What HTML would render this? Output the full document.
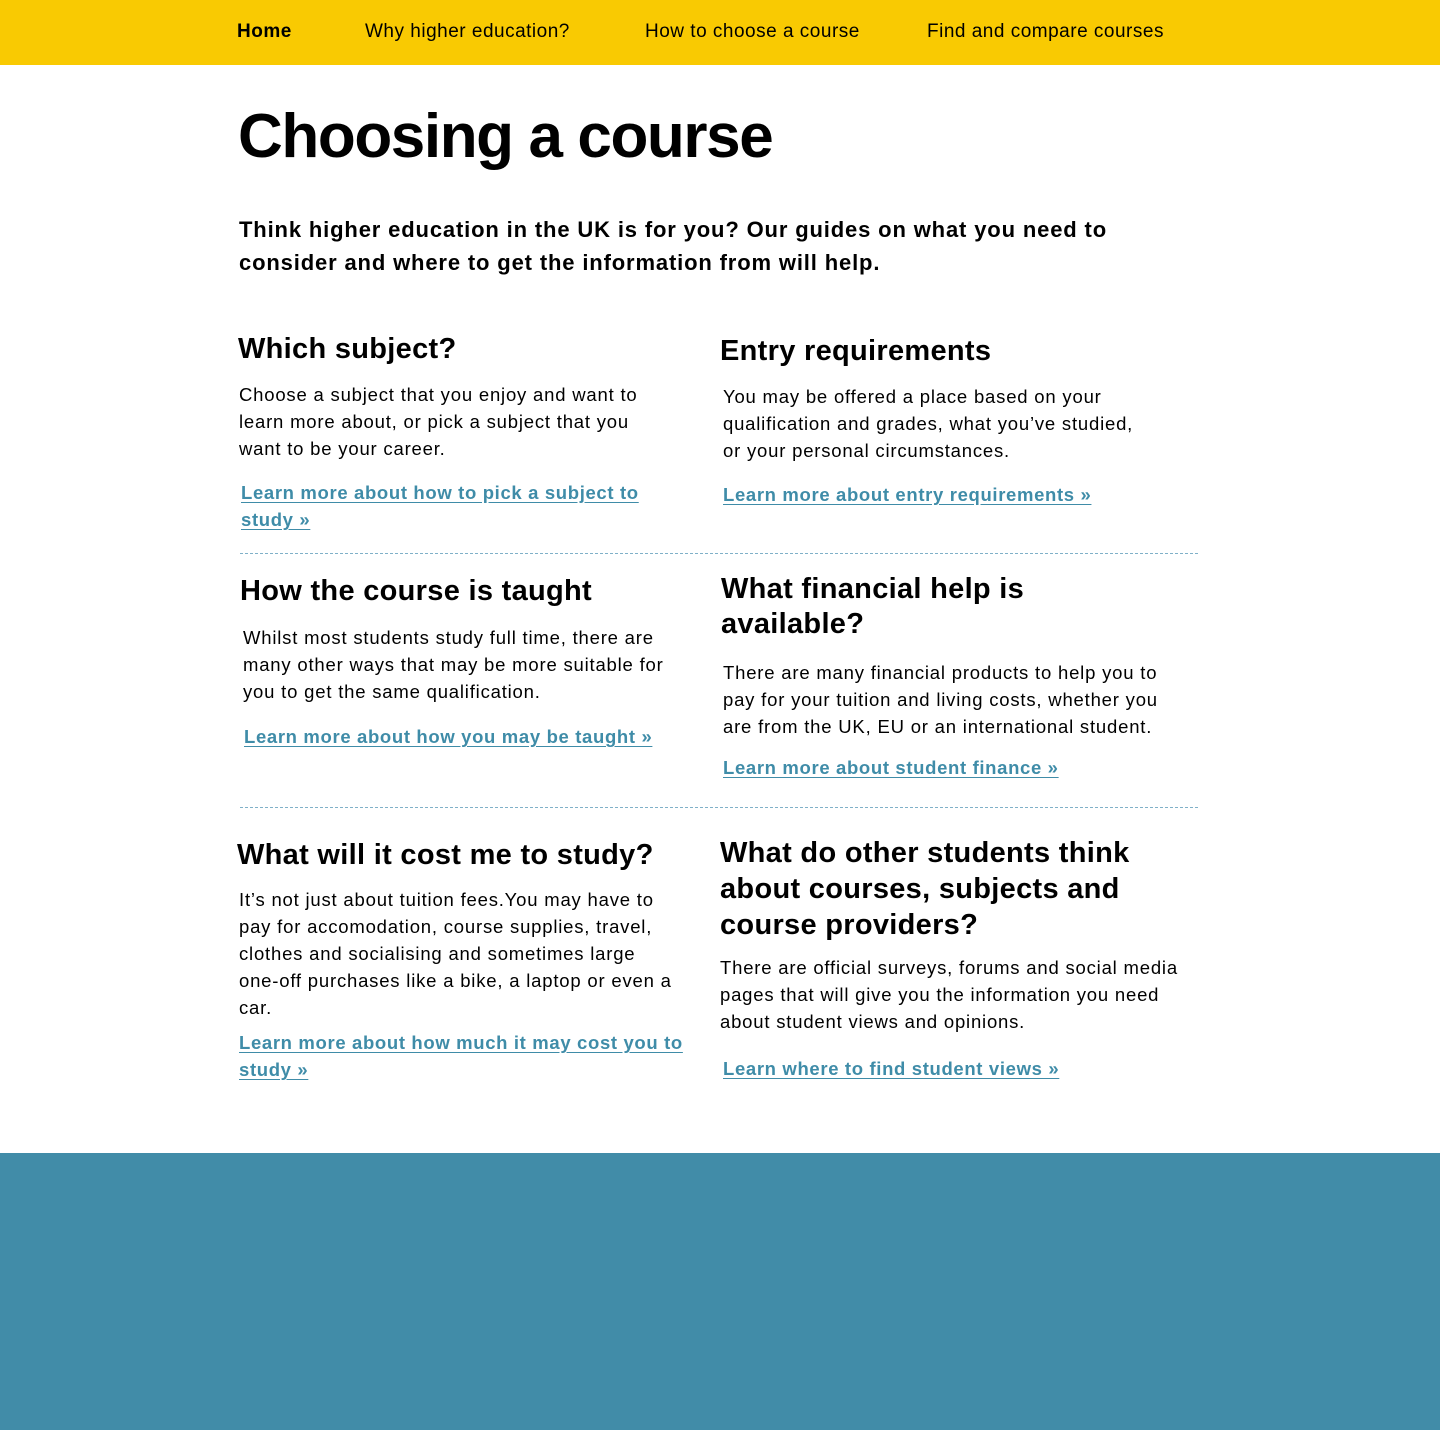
<!DOCTYPE html>
<html><head><meta charset="utf-8"><style>
*{margin:0;padding:0;box-sizing:border-box}
body{width:1440px;height:1430px;position:relative;background:#fff;font-family:"Liberation Sans",sans-serif;color:#000;overflow:hidden}
.nav{position:absolute;left:0;top:0;width:1440px;height:65px;background:#f9ca02}
.nav span{position:absolute;top:20px;font-size:19px;line-height:24px;white-space:nowrap;letter-spacing:0.5px}
.a{position:absolute;white-space:nowrap}
.h{font-size:29px;line-height:36px;font-weight:bold;letter-spacing:0.3px}
.p{font-size:18.5px;line-height:27px;letter-spacing:0.8px}
.l{font-size:18.5px;line-height:27px;font-weight:bold;color:#3f8ca8;text-decoration:underline;text-underline-offset:3px;letter-spacing:0.65px}
.d{position:absolute;left:240px;width:958px;border-top:1px dashed #7fb0c8}
.foot{position:absolute;left:0;top:1153px;width:1440px;height:277px;background:#418ca8}
</style></head><body>
<div class="nav">
<span style="left:237px;font-weight:bold">Home</span>
<span style="left:365px">Why higher education?</span>
<span style="left:645px">How to choose a course</span>
<span style="left:927px">Find and compare courses</span>
</div>
<div class="a" style="left:238px;top:102px;font-size:62px;line-height:70px;font-weight:bold;letter-spacing:-1.4px">Choosing a course</div>
<div class="a" style="left:239px;top:213px;font-size:22px;line-height:33px;font-weight:bold;letter-spacing:0.85px">Think higher education in the UK is for you? Our guides on what you need to<br>consider and where to get the information from will help.</div>

<div class="a h" style="left:238px;top:331px">Which subject?</div>
<div class="a p" style="left:239px;top:381px">Choose a subject that you enjoy and want to<br>learn more about, or pick a subject that you<br>want to be your career.</div>
<div class="a l" style="left:241px;top:479px">Learn more about how to pick a subject to<br>study »</div>

<div class="a h" style="left:720px;top:333px">Entry requirements</div>
<div class="a p" style="left:723px;top:383px">You may be offered a place based on your<br>qualification and grades, what you’ve studied,<br>or your personal circumstances.</div>
<div class="a l" style="left:723px;top:481px">Learn more about entry requirements »</div>

<div class="d" style="top:553px"></div>

<div class="a h" style="left:240px;top:573px">How the course is taught</div>
<div class="a p" style="left:243px;top:624px">Whilst most students study full time, there are<br>many other ways that may be more suitable for<br>you to get the same qualification.</div>
<div class="a l" style="left:244px;top:723px">Learn more about how you may be taught »</div>

<div class="a h" style="left:721px;top:572px;line-height:35px">What financial help is<br>available?</div>
<div class="a p" style="left:723px;top:659px">There are many financial products to help you to<br>pay for your tuition and living costs, whether you<br>are from the UK, EU or an international student.</div>
<div class="a l" style="left:723px;top:754px">Learn more about student finance »</div>

<div class="d" style="top:807px"></div>

<div class="a h" style="left:237px;top:837px">What will it cost me to study?</div>
<div class="a p" style="left:239px;top:886px">It’s not just about tuition fees.You may have to<br>pay for accomodation, course supplies, travel,<br>clothes and socialising and sometimes large<br>one-off purchases like a bike, a laptop or even a<br>car.</div>
<div class="a l" style="left:239px;top:1029px">Learn more about how much it may cost you to<br>study »</div>

<div class="a h" style="left:720px;top:835px">What do other students think<br>about courses, subjects and<br>course providers?</div>
<div class="a p" style="left:720px;top:954px">There are official surveys, forums and social media<br>pages that will give you the information you need<br>about student views and opinions.</div>
<div class="a l" style="left:723px;top:1055px">Learn where to find student views »</div>

<div class="foot"></div>
</body></html>
